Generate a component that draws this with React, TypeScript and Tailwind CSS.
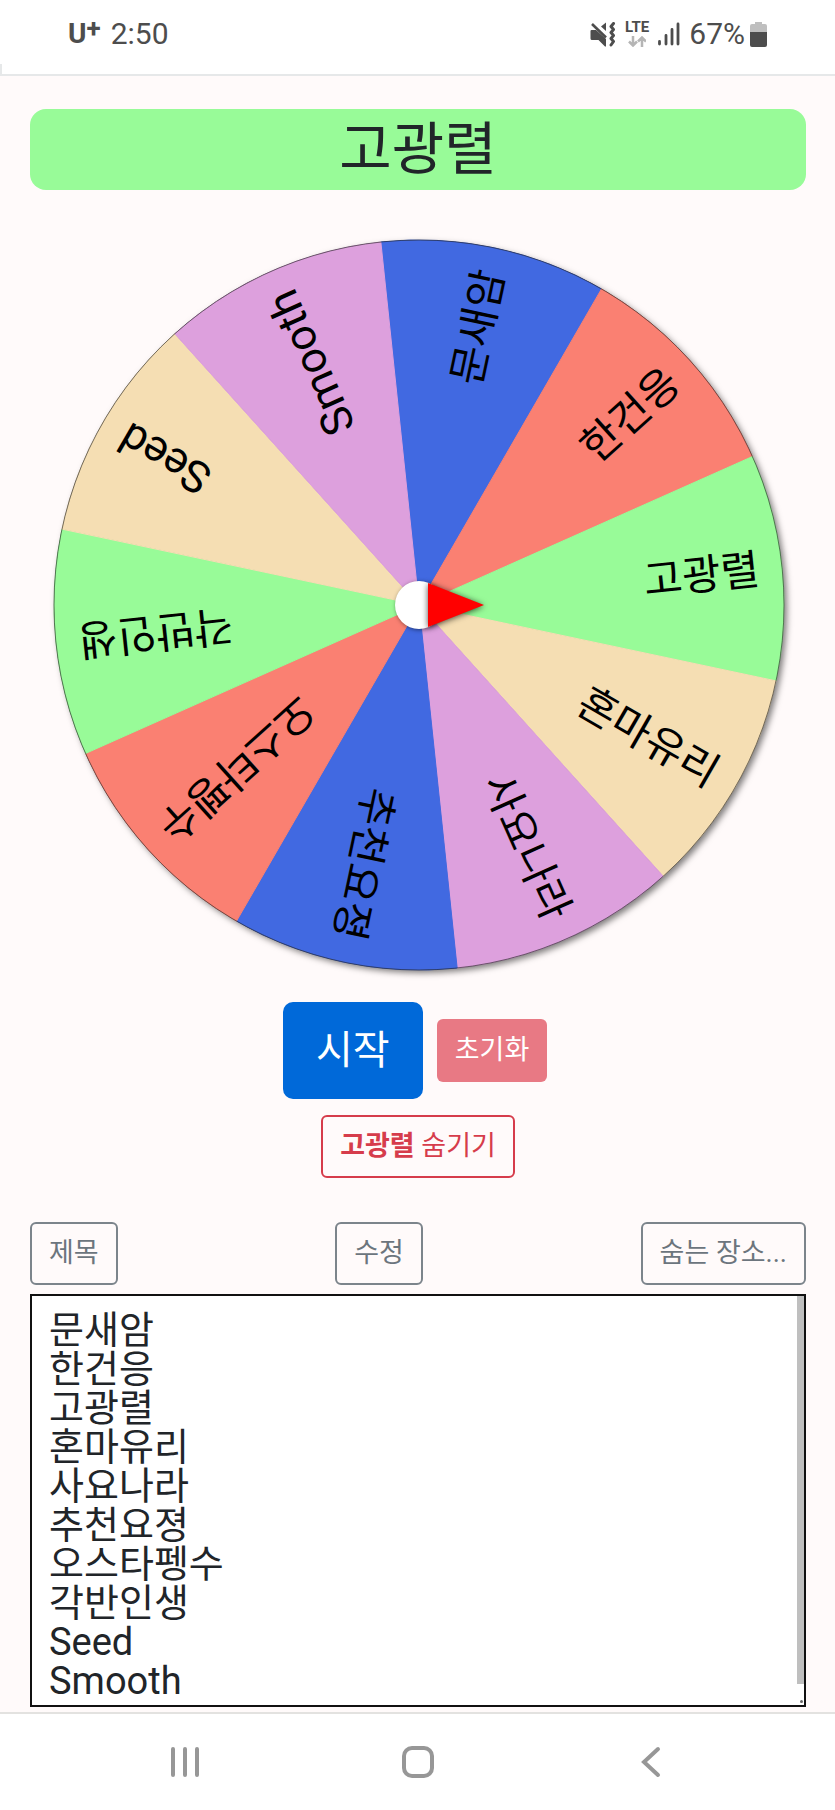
const entries = [
  { name: '문새암', color: '#4169e1' },
  { name: '한건응', color: '#fa8072' },
  { name: '고광렬', color: '#98fb98' },
  { name: '혼마유리', color: '#f5deb3' },
  { name: '사요나라', color: '#dda0dd' },
  { name: '추천요졍', color: '#4169e1' },
  { name: '오스타펭수', color: '#fa8072' },
  { name: '각반인생', color: '#98fb98' },
  { name: 'Seed', color: '#f5deb3' },
  { name: 'Smooth', color: '#dda0dd' },
]

const winner = '고광렬'
const step = 360 / entries.length
const startAngle = -96
const cx = 389
const cy = 367
const radius = 365

function point(angle: number) {
  const rad = (angle * Math.PI) / 180
  return `${cx + radius * Math.cos(rad)} ${cy + radius * Math.sin(rad)}`
}

function StatusBar() {
  return (
    <header className="relative flex h-[76px] items-start justify-between border-b-2 border-[#e6e8e9] bg-white px-[68px] pt-4 text-[#4d4d4d]">
      <div className="flex h-9 items-center gap-[10px]">
        <span className="flex items-start text-[28px] font-bold leading-9">
          U<span className="text-[26px] leading-6">+</span>
        </span>
        <span className="text-[30px] leading-9">2:50</span>
      </div>
      <div className="flex h-9 items-center gap-[9px]">
        <svg className="h-[25px] w-[26px]" viewBox="0 0 26 25" fill="none">
          <path d="M1.500 8H6L16 17V24.500H15L8.500 18H2Q0.500 18 0.500 16.500V9Q0.500 8 1.500 8Z" fill="currentColor" />
          <path d="M11 4.500L16 0.500V9Z" fill="currentColor" />
          <path d="M2 2L16 15.500" stroke="currentColor" strokeWidth="2.600" />
          <path
            d="M23.500 1.500L21 4.500L23.500 7.500L21 10.500L23.500 13.500L21 16.500L23.500 19.500L21 23"
            stroke="currentColor"
            strokeWidth="3"
            strokeLinejoin="round"
            strokeLinecap="round"
          />
        </svg>
        <div className="flex flex-col items-center gap-[3px]">
          <span className="text-[15px] font-bold leading-[12px]">LTE</span>
          <svg className="h-[11px] w-[18px]" viewBox="0 0 18 11" fill="none" stroke="#b5b5b5" strokeWidth="2.500">
            <path d="M5 0V9M1 5.500L5 9.500L9 5.500M14 11V2M10 5.500L14 1.500L18 5.500" />
          </svg>
        </div>
        <svg
          className="h-[24px] w-[22px]"
          viewBox="0 0 22 24"
          stroke="currentColor"
          strokeWidth="2.800"
          strokeLinecap="round"
        >
          <path d="M1.500 19.500V22M8 13.500V22M14 7.500V22M20 2V22" />
        </svg>
        <div className="flex items-center gap-[5px]">
          <span className="text-[30px] leading-9">67%</span>
          <svg className="h-[25px] w-[17px]" viewBox="0 0 17 25">
            <path d="M5 0H12V2H15Q17 2 17 4V11H0V4Q0 2 2 2H5Z" fill="#bfbfbf" />
            <path d="M0 10H17V23Q17 25 15 25H2Q0 25 0 23Z" fill="currentColor" />
          </svg>
        </div>
      </div>
      <span className="absolute bottom-0 left-0 h-[10px] w-[2px] bg-[#e6e8e9]" />
    </header>
  )
}

function Wheel() {
  return (
    <svg className="mt-12 block w-full overflow-visible" viewBox="0 0 776 736">
      <g className="drop-shadow-[3px_3px_3px_rgba(0,0,0,0.5)]">
        <circle cx={cx} cy={cy} r={radius} fill="#333" />
      </g>
      {entries.map((entry, i) => {
        const from = startAngle + i * step
        return (
          <path
            key={entry.name}
            d={`M${cx} ${cy}L${point(from)}A${radius} ${radius} 0 0 1 ${point(from + step)}Z`}
            fill={entry.color}
            stroke={entry.color}
          />
        )
      })}
      <circle cx={cx} cy={cy} r={radius} fill="none" stroke="#222" strokeOpacity="0.6" />
      {entries.map((entry, i) => (
        <text
          key={entry.name}
          x={cx + 342}
          y={cy}
          textAnchor="end"
          dominantBaseline="central"
          className={/[a-z]/i.test(entry.name) ? 'text-[44px]' : 'text-[42px]'}
          transform={`rotate(${startAngle + (i + 0.5) * step} ${cx} ${cy})`}
        >
          {entry.name}
        </text>
      ))}
      {/* hub and pointer */}
      <circle cx={cx} cy={cy} r="24" fill="#fff" className="drop-shadow-[1px_1px_2px_rgba(0,0,0,0.5)]" />
      <path
        d={`M${cx + 9} ${cy - 22}L${cx + 65} ${cy}L${cx + 9} ${cy + 22}Z`}
        fill="#f00"
        className="drop-shadow-[0px_1px_3px_rgba(0,0,0,0.7)]"
      />
    </svg>
  )
}

export default function App() {
  return (
    <div className="min-h-screen bg-[#fffafa] font-[Roboto,'Noto_Sans_CJK_KR',sans-serif]">
      <StatusBar />

      <main className="pb-[5px] pl-[30px] pr-[29px] pt-[33px]">
        <h1 className="rounded-2xl bg-[#98fb98] text-center text-[57px] font-normal leading-[81px] text-[#212529]">
          {winner}
        </h1>

        <Wheel />

        <div className="mt-7 flex items-center justify-center gap-2">
          <button className="mr-1.5 h-[97px] w-[140px] rounded-[10px] bg-[#0069d9] text-[40px] text-white">시작</button>
          <button className="mr-1.5 h-[63px] rounded-md bg-[#e87984] px-[18px] text-[27px] text-white">초기화</button>
        </div>
        <div className="mt-4 flex justify-center">
          <button className="h-[63px] rounded-md border-2 border-[#d63c4b] px-[17px] text-[27px] text-[#d63c4b]">
            <b>{winner}</b> 숨기기
          </button>
        </div>

        <div className="mt-11 flex justify-between text-[27px] text-[#6c757d]">
          <button className="h-[63px] rounded-md border-2 border-[#7c848b] px-[17px]">제목</button>
          <button className="h-[63px] rounded-md border-2 border-[#7c848b] px-[17px]">수정</button>
          <button className="h-[63px] rounded-md border-2 border-[#7c848b] px-[17px]">숨는 장소...</button>
        </div>

        <div className="relative mt-[9px]">
          <textarea
            aria-label="목록"
            rows={10}
            defaultValue={entries.map(e => e.name).join('\n')}
            className="block h-[413px] w-full resize-none overflow-hidden border-2 border-[#111] bg-white px-[17px] pt-[15px] text-[38px] leading-[39px] text-[#212529]"
          />
          <span className="absolute right-[2px] top-[2px] h-[388px] w-[7px] bg-[#bfbfbf]" />
          <span className="absolute bottom-[4px] right-[3px] size-[3px] rounded-full bg-[#666]" />
        </div>
      </main>

      <nav className="grid h-[98px] grid-cols-3 items-center justify-items-center border-t-2 border-[#e3e2e0] bg-white px-[68px] text-[#979797]">
        <button aria-label="최근 앱">
          <svg className="h-8 w-8" viewBox="0 0 32 32" stroke="currentColor" strokeWidth="4" strokeLinecap="round">
            <path d="M4 3V29M16 3V29M28 3V29" />
          </svg>
        </button>
        <button aria-label="홈">
          <svg className="h-[34px] w-[34px]" viewBox="0 0 34 34" fill="none" stroke="currentColor" strokeWidth="4">
            <rect x="3" y="3" width="28" height="28" rx="8" />
          </svg>
        </button>
        <button aria-label="뒤로">
          <svg
            className="h-8 w-8"
            viewBox="0 0 32 32"
            fill="none"
            stroke="currentColor"
            strokeWidth="4"
            strokeLinecap="round"
          >
            <path d="M23 3L9 16L23 29" />
          </svg>
        </button>
      </nav>
    </div>
  )
}
